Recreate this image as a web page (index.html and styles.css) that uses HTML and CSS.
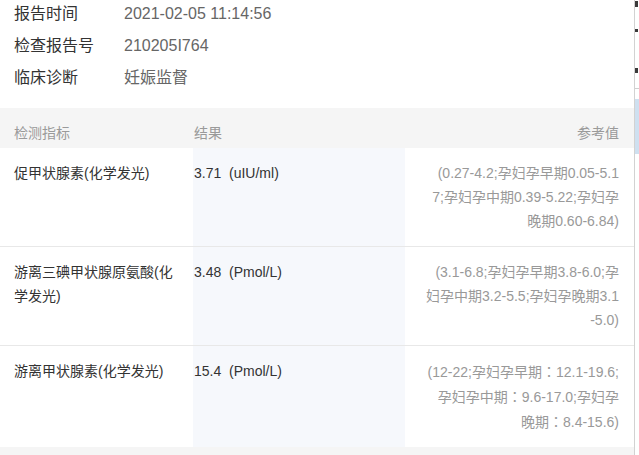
FILE: index.html
```html
<!DOCTYPE html>
<html lang="zh-CN">
<head>
<meta charset="utf-8">
<title>检验报告</title>
<link rel="stylesheet" href="styles.css">
</head>
<body>
<div class="page">
  <main class="report">
    <section class="info">
      <div class="info-row"><span class="label">报告时间</span><span class="value">2021-02-05 11:14:56</span></div>
      <div class="info-row"><span class="label">检查报告号</span><span class="value">210205I764</span></div>
      <div class="info-row"><span class="label">临床诊断</span><span class="value">妊娠监督</span></div>
    </section>
    <section class="table">
      <div class="thead">
        <div class="th c1">检测指标</div>
        <div class="th c2">结果</div>
        <div class="th c3">参考值</div>
      </div>
      <div class="trow">
        <div class="td c1">促甲状腺素(化学发光)</div>
        <div class="td c2">3.71&nbsp;&nbsp;(uIU/ml)</div>
        <div class="td c3">(0.27-4.2;孕妇孕早期0.05-5.1<br>7;孕妇孕中期0.39-5.22;孕妇孕<br>晚期0.60-6.84)</div>
      </div>
      <div class="trow">
        <div class="td c1">游离三碘甲状腺原氨酸(化学发光)</div>
        <div class="td c2">3.48&nbsp;&nbsp;(Pmol/L)</div>
        <div class="td c3">(3.1-6.8;孕妇孕早期3.8-6.0;孕<br>妇孕中期3.2-5.5;孕妇孕晚期3.1<br>-5.0)</div>
      </div>
      <div class="trow last">
        <div class="td c1">游离甲状腺素(化学发光)</div>
        <div class="td c2">15.4&nbsp;&nbsp;(Pmol/L)</div>
        <div class="td c3">(12-22;孕妇孕早期<span class="fw">：</span>12.1-19.6;<br>孕妇孕中期<span class="fw">：</span>9.6-17.0;孕妇孕<br>晚期<span class="fw">：</span>8.4-15.6)</div>
      </div>
    </section>
    <div class="band"></div>
  </main>
  <aside class="edge">
    <div class="edge-mark m1"></div>
    <div class="edge-gap g1"></div>
    <div class="edge-mark m2"></div>
    <div class="edge-gap g2"></div>
    <div class="edge-mark m3"></div>
    <div class="edge-gap g3"></div>
    <div class="edge-line"></div>
    <div class="edge-gap g4"></div>
    <div class="edge-blue"></div>
  </aside>
</div>
</body>
</html>
```

FILE: styles.css
```css
html, body {
  margin: 0;
  padding: 0;
  background: #ffffff;
  overflow: hidden;
}

body {
  font-family: "Liberation Sans", "Noto Sans CJK SC", sans-serif;
  color: #333333;
}

.page {
  display: flex;
  width: 639px;
  height: 455px;
  overflow: hidden;
}

.report {
  width: 634px;
  flex: 0 0 634px;
  display: flex;
  flex-direction: column;
}

.info {
  display: flex;
  flex-direction: column;
  gap: 4px;
  padding-bottom: 16px;
}

.info-row {
  display: flex;
  height: 28px;
  line-height: 28px;
  font-size: 16px;
  padding-left: 14px;
}

.label {
  width: 110px;
  color: #333333;
}

.value {
  color: #666666;
}

.table {
  display: flex;
  flex-direction: column;
}

.thead,
.trow {
  display: grid;
  grid-template-columns: 193px 212px 1fr;
}

.thead {
  height: 40px;
  background: #f5f5f5;
}

.th {
  font-size: 14px;
  color: #9a9a9a;
  line-height: 20px;
  padding-top: 15px;
}

.th.c1 {
  padding-left: 14px;
}

.th.c2 {
  padding-left: 1px;
}

.th.c3 {
  text-align: right;
  padding-right: 15px;
}

.trow {
  border-bottom: 1px solid #e8e8e8;
}

.trow.last {
  border-bottom: none;
}

.td {
  font-size: 14px;
  line-height: 24px;
  padding-top: 13px;
  padding-bottom: 13px;
  min-height: 72px;
}

.td.c1 {
  padding-left: 14px;
  padding-right: 14px;
  color: #333333;
}

.td.c2 {
  padding-left: 1px;
  background: #f6f8fc;
  color: #333333;
}

.td.c3 {
  text-align: right;
  padding-right: 15px;
  color: #999999;
  white-space: nowrap;
}

.fw {
  display: inline-block;
  width: 14px;
  text-align: center;
  font-family: "Noto Sans CJK JP", "Noto Sans CJK SC", sans-serif;
  font-feature-settings: "vert" 0;
}

.band {
  flex: 1;
  background: #f5f5f5;
}

.edge {
  flex: 1;
  border-left: 1px solid #d2d2d2;
  display: flex;
  flex-direction: column;
  background: #ffffff;
}

.edge-mark {
  width: 3px;
  background: #3a3a3a;
}

.m1 { height: 6px; margin-top: 1px; }
.m2 { height: 3px; }
.m3 { height: 5px; }

.g1 { height: 22px; }
.g2 { height: 36px; }
.g3 { height: 15px; }
.g4 { height: 10px; }

.edge-line {
  height: 1px;
  background: #cfcfcf;
}

.edge-blue {
  height: 55px;
  background: #cfe0f0;
}
```
